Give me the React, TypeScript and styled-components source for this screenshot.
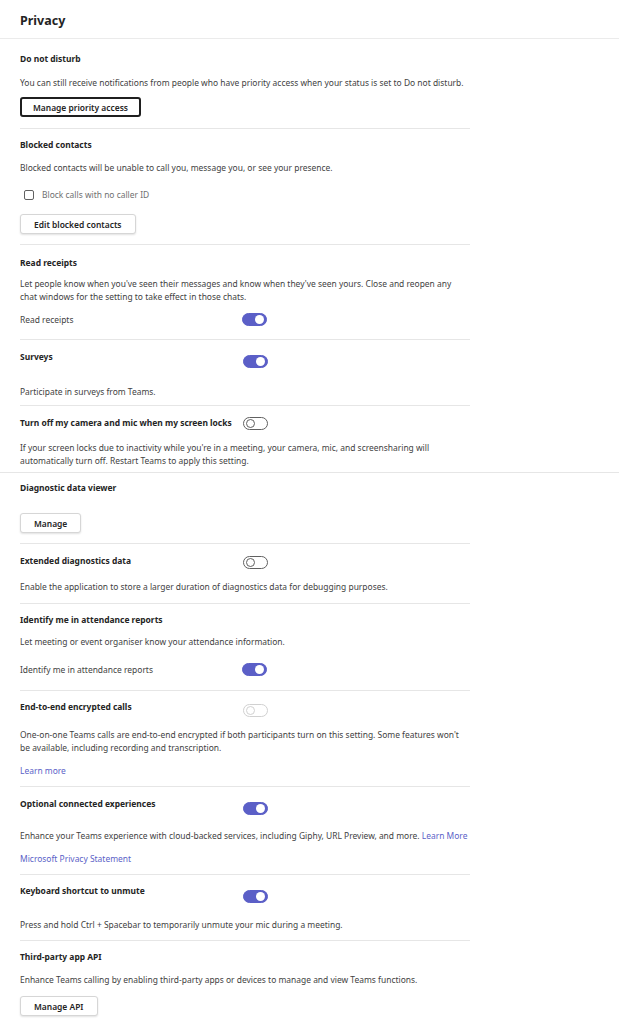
import styled, { createGlobalStyle } from 'styled-components';

const GlobalStyle = createGlobalStyle`
	body {
		margin: 0;
		background: #ffffff;
		font-family: 'Noto Sans', 'Open Sans', sans-serif;
		color: #242424;
	}
`;

type ToggleState = 'on' | 'off' | 'disabled';

function Toggle(props: { state: ToggleState; mt?: number }): JSX.Element {
	return (
		<Track $state={props.state} $mt={props.mt ?? 0}>
			<Knob $state={props.state} />
		</Track>
	);
}

export default function App(): JSX.Element {
	return (
		<Page>
			<GlobalStyle />
			<Header>Privacy</Header>

			<Section $pt={14} $pb={11}>
				<Title>Do not disturb</Title>
				<Desc $mt={11}>
					You can still receive notifications from people who have priority access when your status is set to Do not disturb.
				</Desc>
				<Button $focused $mt={8}>Manage priority access</Button>
			</Section>

			<Section $pt={10} $pb={10}>
				<Title>Blocked contacts</Title>
				<Desc $mt={10}>Blocked contacts will be unable to call you, message you, or see your presence.</Desc>
				<CheckRow>
					<Checkbox />
					<CheckLabel>Block calls with no caller ID</CheckLabel>
				</CheckRow>
				<Button $mt={13}>Edit blocked contacts</Button>
			</Section>

			<Section $pt={12} $pb={13}>
				<Title>Read receipts</Title>
				<Desc $mt={8}>
					Let people know when you've seen their messages and know when they've seen yours. Close and reopen any chat
					windows for the setting to take effect in those chats.
				</Desc>
				<ToggleRow $mt={10}>
					<Label>Read receipts</Label>
					<Toggle state="on" />
				</ToggleRow>
			</Section>

			<Section $pb={7}>
				<ToggleRow>
					<Title>Surveys</Title>
					<Toggle state="on" mt={4} />
				</ToggleRow>
				<Desc $mt={17}>Participate in surveys from Teams.</Desc>
			</Section>

			<Section $pb={5} $full>
				<ToggleRow>
					<Title>Turn off my camera and mic when my screen locks</Title>
					<Toggle state="off" />
				</ToggleRow>
				<Desc $mt={11}>
					If your screen locks due to inactivity while you're in a meeting, your camera, mic, and screensharing will
					automatically turn off. Restart Teams to apply this setting.
				</Desc>
			</Section>

			<Section $pt={9} $pb={10}>
				<Title>Diagnostic data viewer</Title>
				<Button $mt={19}>Manage</Button>
			</Section>

			<Section $pb={10}>
				<ToggleRow>
					<Title>Extended diagnostics data</Title>
					<Toggle state="off" mt={1} />
				</ToggleRow>
				<Desc $mt={11}>Enable the application to store a larger duration of diagnostics data for debugging purposes.</Desc>
			</Section>

			<Section $pt={10} $pb={14}>
				<Title>Identify me in attendance reports</Title>
				<Desc $mt={9}>Let meeting or event organiser know your attendance information.</Desc>
				<ToggleRow $mt={15}>
					<Label>Identify me in attendance reports</Label>
					<Toggle state="on" />
				</ToggleRow>
			</Section>

			<Section $pt={10}>
				<ToggleRow>
					<Title>End-to-end encrypted calls</Title>
					<Toggle state="disabled" mt={3} />
				</ToggleRow>
				<Desc $mt={11}>
					One-on-one Teams calls are end-to-end encrypted if both participants turn on this setting. Some features won't
					be available, including recording and transcription.
				</Desc>
				<LinkLine $mt={10}>
					<Link>Learn more</Link>
				</LinkLine>
			</Section>

			<Section>
				<ToggleRow>
					<Title>Optional connected experiences</Title>
					<Toggle state="on" mt={4} />
				</ToggleRow>
				<Desc $mt={14} $nowrap>
					Enhance your Teams experience with cloud-backed services, including Giphy, URL Preview, and more.{' '}
					<Link>Learn More</Link>
				</Desc>
				<LinkLine $mt={10}>
					<Link>Microsoft Privacy Statement</Link>
				</LinkLine>
			</Section>

			<Section $pt={10}>
				<ToggleRow>
					<Title>Keyboard shortcut to unmute</Title>
					<Toggle state="on" mt={5} />
				</ToggleRow>
				<Desc $mt={15}>Press and hold Ctrl + Spacebar to temporarily unmute your mic during a meeting.</Desc>
			</Section>

			<Section $pt={10} $last>
				<Title>Third-party app API</Title>
				<Desc $mt={10}>Enhance Teams calling by enabling third-party apps or devices to manage and view Teams functions.</Desc>
				<Button $mt={10}>Manage API</Button>
			</Section>
		</Page>
	);
}

const Page = styled.div`
	width: 619px;
	display: flex;
	flex-direction: column;
	font-size: 8.45px;
	line-height: 13px;
`;

const Header = styled.div`
	height: 39px;
	box-sizing: border-box;
	padding: 3px 20px 0;
	display: flex;
	align-items: center;
	font-size: 12.5px;
	font-weight: 700;
	border-bottom: 1px solid #ebebeb;
`;

const Section = styled.div<{ $pt?: number; $pb?: number; $full?: boolean; $last?: boolean }>`
	display: flex;
	flex-direction: column;
	align-items: flex-start;
	margin: ${(p) => (p.$full ? '0' : '0 149px 0 20px')};
	padding: ${(p) => p.$pt ?? 11}px ${(p) => (p.$full ? '20px' : '0')} ${(p) => p.$pb ?? 9}px;
	border-bottom: ${(p) => (p.$last ? 'none' : '1px solid #e6e6e6')};

	& > * {
		max-width: 452px;
	}
`;

const Title = styled.div`
	font-weight: 700;
	line-height: 12px;
	white-space: nowrap;
`;

const Desc = styled.div<{ $mt?: number; $nowrap?: boolean }>`
	margin-top: ${(p) => p.$mt ?? 10}px;
	color: #424242;
	white-space: ${(p) => (p.$nowrap ? 'nowrap' : 'normal')};
`;

const Label = styled.div`
	color: #424242;
	width: 222px;
`;

const ToggleRow = styled.div<{ $mt?: number }>`
	display: flex;
	align-items: flex-start;
	margin-top: ${(p) => p.$mt ?? 0}px;

	& > ${Title} {
		min-width: 215px;
		margin-right: 8px;
	}
`;

const Track = styled.div<{ $state: ToggleState; $mt: number }>`
	box-sizing: border-box;
	width: 25px;
	height: 13px;
	margin-top: ${(p) => p.$mt}px;
	border-radius: 7px;
	display: flex;
	align-items: center;
	padding: 0 2px;
	justify-content: ${(p) => (p.$state === 'on' ? 'flex-end' : 'flex-start')};
	background: ${(p) => (p.$state === 'on' ? '#5b5fc7' : '#ffffff')};
	border: 1px solid
		${(p) => (p.$state === 'on' ? '#5b5fc7' : p.$state === 'disabled' ? '#d1d1d1' : '#616161')};
	flex-shrink: 0;
`;

const Knob = styled.div<{ $state: ToggleState }>`
	box-sizing: border-box;
	width: 9px;
	height: 9px;
	border-radius: 50%;
	background: #ffffff;
	border: ${(p) =>
		p.$state === 'on' ? 'none' : `1px solid ${p.$state === 'disabled' ? '#d1d1d1' : '#616161'}`};
`;

const Button = styled.button<{ $focused?: boolean; $mt?: number }>`
	box-sizing: border-box;
	height: 20px;
	margin-top: ${(p) => p.$mt ?? 10}px;
	padding: 0 ${(p) => (p.$focused ? 11 : 13)}px;
	font-family: inherit;
	font-size: 8.45px;
	font-weight: 600;
	color: #242424;
	background: #ffffff;
	border-radius: 3px;
	border: ${(p) => (p.$focused ? '2px solid #1f1f1f' : '1px solid #d6d6d6')};
	box-shadow: ${(p) => (p.$focused ? 'none' : '0 1px 2px rgba(0, 0, 0, 0.12)')};
`;

const CheckRow = styled.div`
	display: flex;
	align-items: center;
	gap: 8px;
	margin-top: 14px;
	padding-left: 4px;
`;

const Checkbox = styled.div`
	box-sizing: border-box;
	width: 10px;
	height: 10px;
	border: 1px solid #616161;
	border-radius: 2px;
`;

const CheckLabel = styled.div`
	color: #707070;
`;

const LinkLine = styled.div<{ $mt?: number }>`
	margin-top: ${(p) => p.$mt ?? 10}px;
`;

const Link = styled.span`
	color: #5b5fc7;
	cursor: pointer;
`;
